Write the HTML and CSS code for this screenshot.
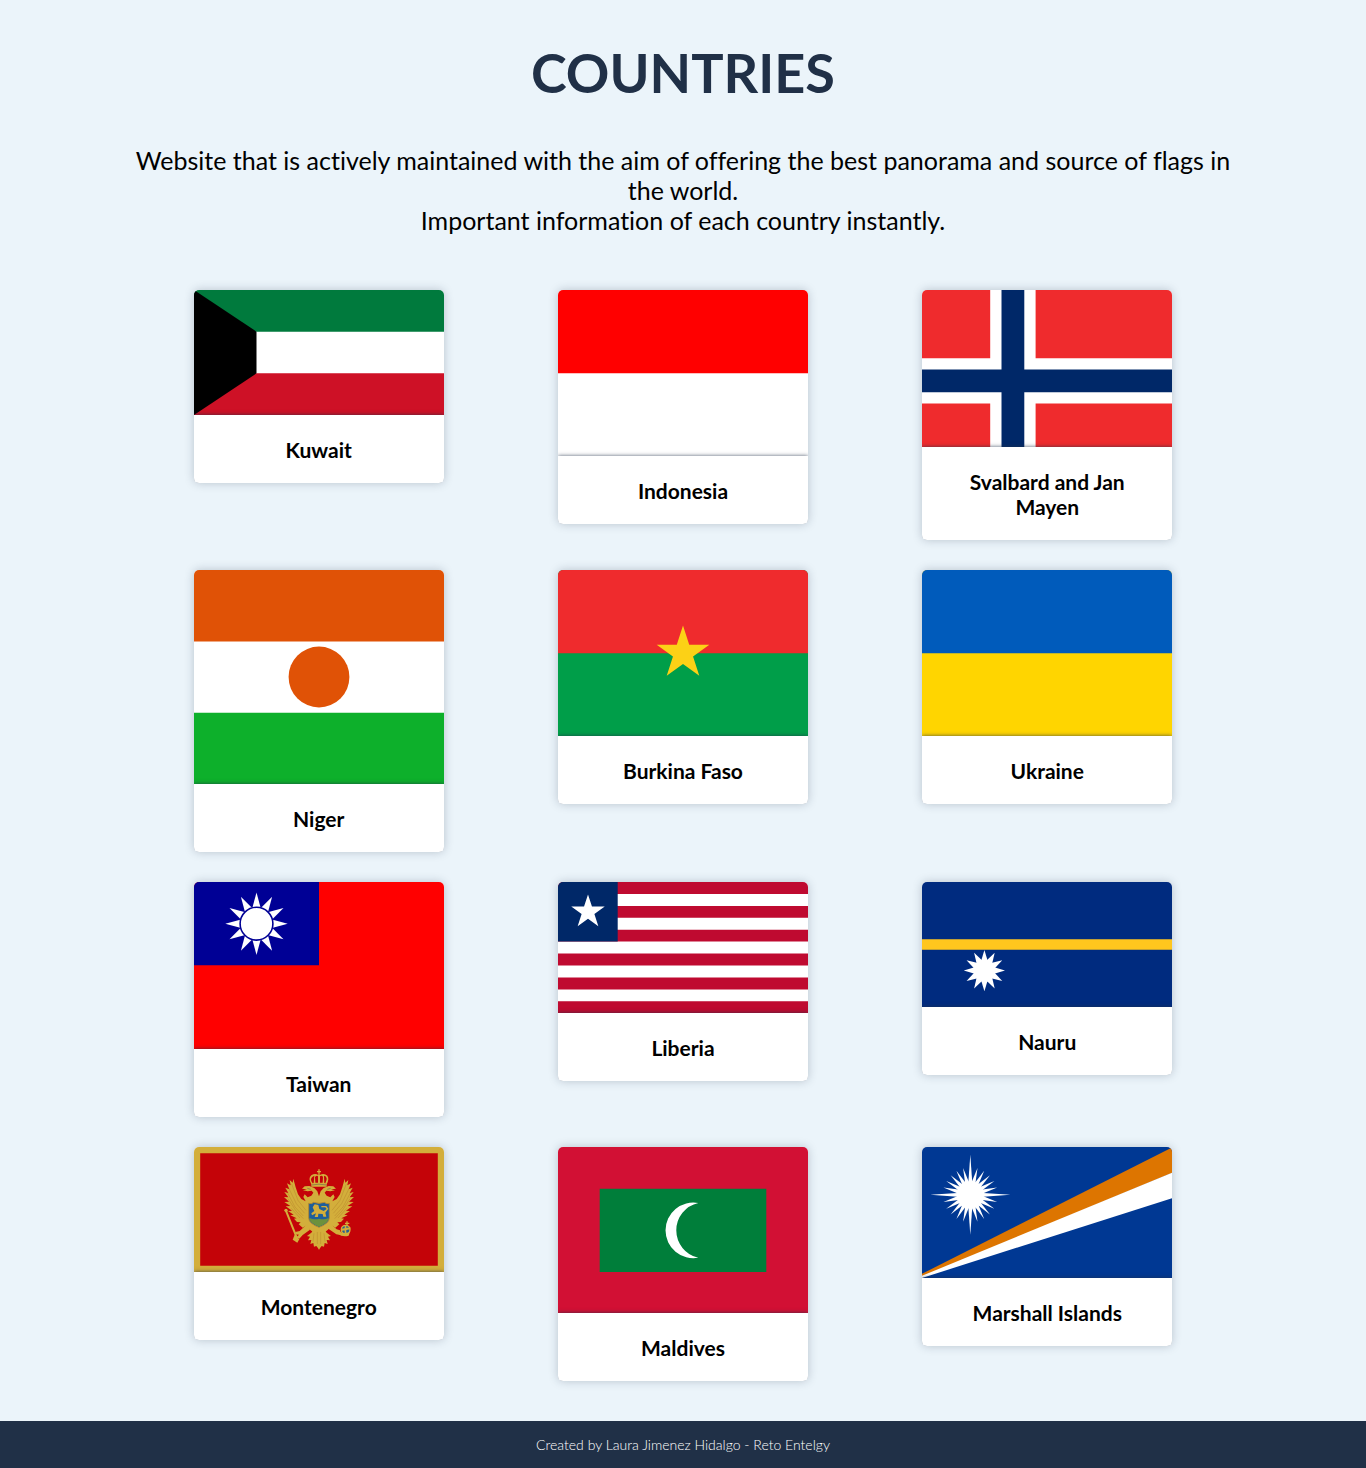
FILE: index.html
```html
<!DOCTYPE html>
<html lang="en">
<head>
<meta charset="utf-8">
<meta name="viewport" content="width=device-width, initial-scale=1">
<title>Countries</title>
<link rel="stylesheet" href="styles.css">
</head>
<body>
<main class="page">
  <h1 class="title">COUNTRIES</h1>
  <p class="intro">Website that is actively maintained with the aim of offering the best panorama and source of flags in the world.<br>Important information of each country instantly.</p>
  <section class="grid">
    <article class="card">
      <svg class="flag" viewBox="0 0 250 125" role="img" aria-label="Flag of Kuwait">
        <path fill="#fff" d="M0 0h250v125H0z"/>
        <path fill="#007a3d" d="M0 0h250v41.7H0z"/>
        <path fill="#ce1126" d="M0 83.3h250V125H0z"/>
        <path d="M0 0l62.5 41.7v41.6L0 125z"/>
      </svg>
      <h2 class="name">Kuwait</h2>
    </article>
    <article class="card">
      <svg class="flag" viewBox="0 0 250 166" role="img" aria-label="Flag of Indonesia">
        <path fill="#fff" d="M0 0h250v167H0z"/>
        <path fill="#f00" d="M0 0h250v83.3H0z"/>
      </svg>
      <h2 class="name">Indonesia</h2>
    </article>
    <article class="card">
      <svg class="flag" viewBox="0 0 250 157" role="img" aria-label="Flag of Svalbard and Jan Mayen">
        <path fill="#ef2b2d" d="M0 0h250v157H0z"/>
        <path fill="#fff" d="M68.2 0h45.4v157H68.2zM0 68.2h250v45.4H0z"/>
        <path fill="#002868" d="M79.5 0h22.8v157H79.5zM0 79.5h250v22.8H0z"/>
      </svg>
      <h2 class="name">Svalbard and Jan Mayen</h2>
    </article>

    <article class="card">
      <svg class="flag" viewBox="0 0 250 214" role="img" aria-label="Flag of Niger">
        <path fill="#fff" d="M0 0h250v214H0z"/>
        <path fill="#e05206" d="M0 0h250v71.4H0z"/>
        <path fill="#0db02b" d="M0 142.8h250V214H0z"/>
        <circle cx="125" cy="107" r="30.4" fill="#e05206"/>
      </svg>
      <h2 class="name">Niger</h2>
    </article>
    <article class="card">
      <svg class="flag" viewBox="0 0 250 166" role="img" aria-label="Flag of Burkina Faso">
        <path fill="#009e49" d="M0 0h250v167H0z"/>
        <path fill="#ef2b2d" d="M0 0h250v83.3H0z"/>
        <polygon transform="translate(125 83.3) scale(.277)" fill="#fcd116" points="0,-100 22.5,-30.9 95.1,-30.9 36.3,11.8 58.8,80.9 0,38.2 -58.8,80.9 -36.3,11.8 -95.1,-30.9 -22.5,-30.9"/>
      </svg>
      <h2 class="name">Burkina Faso</h2>
    </article>
    <article class="card">
      <svg class="flag" viewBox="0 0 250 166" role="img" aria-label="Flag of Ukraine">
        <path fill="#ffd500" d="M0 0h250v167H0z"/>
        <path fill="#005bbb" d="M0 0h250v83.3H0z"/>
      </svg>
      <h2 class="name">Ukraine</h2>
    </article>

    <article class="card">
      <svg class="flag" viewBox="0 0 250 167" role="img" aria-label="Flag of Taiwan">
        <defs>
          <path id="tw-ray" d="M0-31.2L4.5-14.5h-9z"/>
          <g id="tw-rays"><use href="#tw-ray"/><use href="#tw-ray" transform="rotate(30)"/><use href="#tw-ray" transform="rotate(60)"/></g>
        </defs>
        <path fill="#f00" d="M0 0h250v167H0z"/>
        <path fill="#000095" d="M0 0h125v83.3H0z"/>
        <g transform="translate(62.5 41.7)" fill="#fff">
          <use href="#tw-rays"/><use href="#tw-rays" transform="rotate(90)"/><use href="#tw-rays" transform="rotate(180)"/><use href="#tw-rays" transform="rotate(270)"/>
          <circle r="16.4" stroke="#000095" stroke-width="1.6"/>
        </g>
      </svg>
      <h2 class="name">Taiwan</h2>
    </article>
    <article class="card">
      <svg class="flag" viewBox="0 0 250 131" role="img" aria-label="Flag of Liberia">
        <path fill="#fff" d="M0 0h250v131H0z"/>
        <path fill="#bf0a30" d="M0 0h250v11.9H0zM0 23.9h250v11.9H0zM0 47.7h250v11.9H0zM0 71.6h250v11.9H0zM0 95.5h250v11.9H0zM0 119.3h250V131H0z"/>
        <path fill="#002868" d="M0 0h59.7v59.6H0z"/>
        <polygon transform="translate(30 30) scale(.176)" fill="#fff" points="0,-100 22.5,-30.9 95.1,-30.9 36.3,11.8 58.8,80.9 0,38.2 -58.8,80.9 -36.3,11.8 -95.1,-30.9 -22.5,-30.9"/>
      </svg>
      <h2 class="name">Liberia</h2>
    </article>
    <article class="card">
      <svg class="flag" viewBox="0 0 250 125" role="img" aria-label="Flag of Nauru">
        <defs>
          <path id="nr-ray" d="M0-20.6L3-10.6V0h-6v-10.6z"/>
          <g id="nr-rays"><use href="#nr-ray"/><use href="#nr-ray" transform="rotate(30)"/><use href="#nr-ray" transform="rotate(60)"/></g>
        </defs>
        <path fill="#002b7f" d="M0 0h250v125H0z"/>
        <path fill="#ffc61e" d="M0 57.3h250v10.4H0z"/>
        <g transform="translate(62.4 88.6)" fill="#fff">
          <use href="#nr-rays"/><use href="#nr-rays" transform="rotate(90)"/><use href="#nr-rays" transform="rotate(180)"/><use href="#nr-rays" transform="rotate(270)"/>
          <circle r="10.8"/>
        </g>
      </svg>
      <h2 class="name">Nauru</h2>
    </article>

    <article class="card">
      <svg class="flag" viewBox="0 0 250 125" role="img" aria-label="Flag of Montenegro">
        <path fill="#d3ae3b" d="M0 0h250v125H0z"/>
        <path fill="#c40308" d="M6.2 6.2h237.6v112.6H6.2z"/>
        <g transform="translate(80 13) scale(.3333)" fill="#d3ae3b">
          <defs>
            <g id="eagle-half">
              <path d="M58 56L65 82 72 103 82 117 95 124 88 111 92 103 101 112 112 107 118 98 113 92 101 94 87 91 99 88 84 86 92 79 106 78 121 84 130 94 136 112V218H120L109 210 96 197 86 203 74 193 80 187 69 186 60 176 68 175 49 166 59 164 42 153 54 152 35 139 49 138 31 126 45 125 30 111 43 112 31 96 43 99 34 83 46 88 39 70 50 76 47 60 56 68z"/>
              <path d="M124 200L112 218 99 228 108 230 102 241 112 240 109 252 118 249 120 260 127 258 136 269V200z"/>
              <path fill="none" stroke="#a97325" stroke-width="1" d="M53 72L72 121 96 151M44 84L67 131 92 160M41 99L63 141 88 168M42 116L66 153 88 176M52 145L78 174M120 220L117 245M130 216V252"/>
            </g>
          </defs>
          <use href="#eagle-half"/>
          <use href="#eagle-half" transform="matrix(-1 0 0 1 270 0)"/>
          <path d="M112 73Q101 55 112 46 123 38 133 45V37H129V33H133V28H137V33H141V37H137V45Q151 38 160 47 167 56 158 73V80H112z"/>
          <path fill="#c40308" d="M116 70Q106 56 116 50L121 47 119 69zM124 68L123 51Q129 45 132 49L132 68zM138 68V49Q144 45 147 51L146 68zM151 69L150 47Q164 50 154 70z"/>
          <path fill="none" stroke="#6e6750" stroke-width="2" d="M113 75Q135 70 157 75M100 85L110 88M170 85L160 88"/>
          <path d="M100 192L77 213 64 216 64 223 75 224 67 232 76 236 86 225 108 209zM170 192L188 208 198 211 203 226 187 223 163 206z"/>
          <path fill="none" stroke="#d3ae3b" stroke-width="6" d="M36 153L71 240"/>
          <circle cx="36" cy="151" r="5"/><path d="M62 224L76 238 70 248 56 239z"/>
          <circle cx="215" cy="209" r="13" fill="#245f93" stroke="#d3ae3b" stroke-width="4"/>
          <path d="M201 206L229 202V208L201 213zM212 196H217V222H212zM217 184H221V188H226V192H221V198H217V192H213V188H217zM193 211Q205 224 228 215L224 227Q205 232 192 221z"/>
          <path fill="#1e5e9a" stroke="#b18a35" stroke-width="3" d="M104 130Q113 133 119 127 135 133 151 127 157 133 166 130V174Q165 191 135 202 105 191 104 174z"/>
          <path fill="#6d913c" d="M106 174Q121 180 135 176 151 180 164 174 162 190 135 200 108 190 106 174z"/>
          <path d="M116 142L122 133 133 135 136 147 149 153 158 147 154 142H142V138H157L163 146 154 158 157 170H148L146 162 133 161 132 171H122L126 160 114 166 112 160 121 153z"/>
        </g>
      </svg>
      <h2 class="name">Montenegro</h2>
    </article>
    <article class="card">
      <svg class="flag" viewBox="0 0 250 166" role="img" aria-label="Flag of Maldives">
        <path fill="#d21034" d="M0 0h250v167H0z"/>
        <path fill="#007e3a" d="M41.7 41.7h166.6V125H41.7z"/>
        <path fill="#fff" d="M140.3 56A27.8 27.8 0 1 0 140.3 110.7A28 28 0 0 1 140.3 56z"/>
      </svg>
      <h2 class="name">Maldives</h2>
    </article>
    <article class="card">
      <svg class="flag" viewBox="0 0 250 131" role="img" aria-label="Flag of Marshall Islands">
        <defs>
          <path id="mh-ray" d="M0-27.8L1.9-13V0h-3.8v-13z"/>
          <g id="mh-rays"><path d="M0-40L1.9-13V0h-3.8v-13z"/><use href="#mh-ray" transform="rotate(15)"/><use href="#mh-ray" transform="rotate(30)"/><use href="#mh-ray" transform="rotate(45)"/><use href="#mh-ray" transform="rotate(60)"/><use href="#mh-ray" transform="rotate(75)"/></g>
        </defs>
        <path fill="#003893" d="M0 0h250v131H0z"/>
        <path fill="#dd7500" d="M0 126.8L250 .5V26L0 130z"/>
        <path fill="#fff" d="M0 128.8L250 25.8V51.2L0 131z"/>
        <g transform="translate(48.3 47.8)" fill="#fff">
          <use href="#mh-rays"/><use href="#mh-rays" transform="rotate(90)"/><use href="#mh-rays" transform="rotate(180)"/><use href="#mh-rays" transform="rotate(270)"/>
          <circle r="13.6"/>
        </g>
      </svg>
      <h2 class="name">Marshall Islands</h2>
    </article>
  </section>
</main>
<footer class="footer">Created by Laura Jimenez Hidalgo - Reto Entelgy</footer>
</body>
</html>
```
FILE: styles.css
```css
* {
  box-sizing: border-box;
}

body {
  margin: 0;
  background: #ebf4fa;
  color: #000;
  font-family: Lato, sans-serif;
  font-variant-ligatures: none;
}

.page {
  width: 80%;
  margin: 0 auto;
  padding: 40px 0;
  text-align: center;
}

.title {
  margin: 0;
  color: #203047;
  font-size: 54px;
  font-weight: 700;
  line-height: 66px;
}

.intro {
  margin: 39px -8px 55px;
  font-size: 25px;
  line-height: 30px;
}

.grid {
  display: grid;
  grid-template-columns: repeat(auto-fit, minmax(300px, 1fr));
  gap: 30px 0;
  align-items: start;
  justify-items: center;
}

.card {
  width: 250px;
  overflow: hidden;
  border-radius: 5px;
  background: #fff;
  box-shadow: 0 0 10px rgba(32, 48, 71, 0.25);
}

.flag {
  display: block;
  width: 100%;
  height: auto;
}

/* Positioned so that its shadow falls on the flag above it. */
.name {
  position: relative;
  margin: 0;
  padding: 22px 21px 21px;
  background: #fff;
  box-shadow: 0 0 4px rgba(32, 48, 71, 0.8);
  font-size: 21px;
  font-weight: 700;
  line-height: 25px;
}

.footer {
  padding: 15px;
  background: #203047;
  color: #fff;
  font-size: 14px;
  font-weight: 300;
  line-height: 17px;
  text-align: center;
}
```
